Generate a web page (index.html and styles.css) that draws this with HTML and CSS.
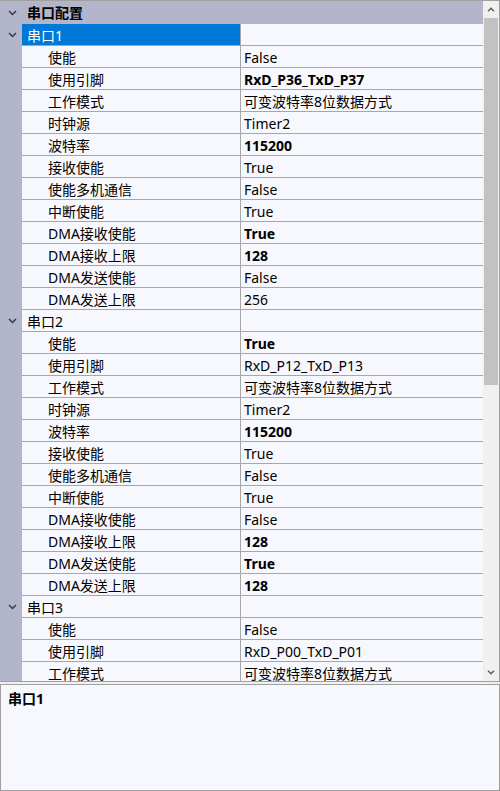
FILE: index.html
```html
<!DOCTYPE html>
<html>
<head>
<meta charset="utf-8">
<link rel="stylesheet" href="styles.css">
</head>
<body>
<div class="grid">
  <div class="rows">
    <div class="head">
      <div class="gut"><svg class="chev" viewBox="0 0 9 6"><polyline points="1,1 4.5,4.5 8,1"/></svg></div>
      <div class="headtxt">串口配置</div>
    </div>

    <div class="row">
      <div class="gut"><svg class="chev" viewBox="0 0 9 6"><polyline points="1,1 4.5,4.5 8,1"/></svg></div>
      <div class="name cat sel">串口1</div><div class="value"></div>
    </div>
    <div class="row"><div class="gut"></div><div class="name">使能</div><div class="value">False</div></div>
    <div class="row"><div class="gut"></div><div class="name">使用引脚</div><div class="value b">RxD_P36_TxD_P37</div></div>
    <div class="row"><div class="gut"></div><div class="name">工作模式</div><div class="value">可变波特率8位数据方式</div></div>
    <div class="row"><div class="gut"></div><div class="name">时钟源</div><div class="value">Timer2</div></div>
    <div class="row"><div class="gut"></div><div class="name">波特率</div><div class="value b">115200</div></div>
    <div class="row"><div class="gut"></div><div class="name">接收使能</div><div class="value">True</div></div>
    <div class="row"><div class="gut"></div><div class="name">使能多机通信</div><div class="value">False</div></div>
    <div class="row"><div class="gut"></div><div class="name">中断使能</div><div class="value">True</div></div>
    <div class="row"><div class="gut"></div><div class="name">DMA接收使能</div><div class="value b">True</div></div>
    <div class="row"><div class="gut"></div><div class="name">DMA接收上限</div><div class="value b">128</div></div>
    <div class="row"><div class="gut"></div><div class="name">DMA发送使能</div><div class="value">False</div></div>
    <div class="row"><div class="gut"></div><div class="name">DMA发送上限</div><div class="value">256</div></div>

    <div class="row">
      <div class="gut"><svg class="chev" viewBox="0 0 9 6"><polyline points="1,1 4.5,4.5 8,1"/></svg></div>
      <div class="name cat">串口2</div><div class="value"></div>
    </div>
    <div class="row"><div class="gut"></div><div class="name">使能</div><div class="value b">True</div></div>
    <div class="row"><div class="gut"></div><div class="name">使用引脚</div><div class="value">RxD_P12_TxD_P13</div></div>
    <div class="row"><div class="gut"></div><div class="name">工作模式</div><div class="value">可变波特率8位数据方式</div></div>
    <div class="row"><div class="gut"></div><div class="name">时钟源</div><div class="value">Timer2</div></div>
    <div class="row"><div class="gut"></div><div class="name">波特率</div><div class="value b">115200</div></div>
    <div class="row"><div class="gut"></div><div class="name">接收使能</div><div class="value">True</div></div>
    <div class="row"><div class="gut"></div><div class="name">使能多机通信</div><div class="value">False</div></div>
    <div class="row"><div class="gut"></div><div class="name">中断使能</div><div class="value">True</div></div>
    <div class="row"><div class="gut"></div><div class="name">DMA接收使能</div><div class="value">False</div></div>
    <div class="row"><div class="gut"></div><div class="name">DMA接收上限</div><div class="value b">128</div></div>
    <div class="row"><div class="gut"></div><div class="name">DMA发送使能</div><div class="value b">True</div></div>
    <div class="row"><div class="gut"></div><div class="name">DMA发送上限</div><div class="value b">128</div></div>

    <div class="row">
      <div class="gut"><svg class="chev" viewBox="0 0 9 6"><polyline points="1,1 4.5,4.5 8,1"/></svg></div>
      <div class="name cat">串口3</div><div class="value"></div>
    </div>
    <div class="row"><div class="gut"></div><div class="name">使能</div><div class="value">False</div></div>
    <div class="row"><div class="gut"></div><div class="name">使用引脚</div><div class="value">RxD_P00_TxD_P01</div></div>
    <div class="row"><div class="gut"></div><div class="name">工作模式</div><div class="value">可变波特率8位数据方式</div></div>
  </div>
  <div class="scroll">
    <div class="arrow"><svg class="sarr" viewBox="0 0 8 5"><polyline points="1,4.2 4,1.2 7,4.2"/></svg></div>
    <div class="thumb"></div>
    <div class="track"></div>
    <div class="arrow"><svg class="sarr" viewBox="0 0 8 5"><polyline points="1,0.8 4,3.8 7,0.8"/></svg></div>
  </div>
</div>
<div class="desc">
  <div class="desctitle">串口1</div>
</div>
</body>
</html>
```

FILE: styles.css
```css
html, body {
  margin: 0;
  padding: 0;
}
body {
  width: 500px;
  height: 791px;
  background: #f0f0f0;
  font-family: "Noto Sans", "Noto Sans CJK SC", sans-serif;
  font-size: 14px;
  color: #000;
  overflow: hidden;
}
.grid {
  box-sizing: border-box;
  width: 500px;
  height: 682px;
  border: 1px solid #a0a0a0;
  border-left-color: #b3b6ca;
  display: flex;
  background: #f7f8fd;
}
.rows {
  width: 482px;
  height: 680px;
  overflow: hidden;
  display: flex;
  flex-direction: column;
}
.head {
  display: flex;
  height: 23px;
  flex: none;
  background: #b3b6ca;
}
.headtxt {
  font-weight: bold;
  line-height: 23px;
  padding-left: 5px;
}
.gut {
  width: 21px;
  flex: none;
  background: #b3b6ca;
  display: flex;
  align-items: center;
  justify-content: center;
}
.chev {
  width: 9px;
  height: 6px;
  fill: none;
  stroke: #3a3a3a;
  stroke-width: 1.5;
  margin-left: 1px;
}
.row {
  display: flex;
  height: 22px;
  flex: none;
}
.name {
  box-sizing: border-box;
  width: 219px;
  flex: none;
  height: 22px;
  line-height: 21px;
  padding-top: 1px;
  padding-left: 26px;
  border-right: 1px solid #a7a7a7;
  border-bottom: 1px solid #a7a7a7;
  white-space: nowrap;
  overflow: hidden;
}
.name.cat {
  padding-left: 5px;
}
.name.sel {
  background: #0078d7;
  color: #fff;
}
.value {
  box-sizing: border-box;
  flex: 1;
  height: 22px;
  line-height: 21px;
  padding-top: 1px;
  padding-left: 3px;
  border-bottom: 1px solid #a7a7a7;
  white-space: nowrap;
  overflow: hidden;
}
.b {
  font-weight: bold;
}
.scroll {
  width: 16px;
  height: 680px;
  background: #f0f0f0;
  display: flex;
  flex-direction: column;
}
.arrow {
  height: 17px;
  flex: none;
  display: flex;
  align-items: center;
  justify-content: center;
}
.sarr {
  width: 8px;
  height: 5px;
  fill: none;
  stroke: #606060;
  stroke-width: 1.5;
}
.thumb {
  height: 367px;
  margin: 0 1px;
  background: #c2c2c2;
  flex: none;
}
.track {
  flex: 1;
}
.desc {
  box-sizing: border-box;
  margin-top: 2px;
  width: 500px;
  height: 107px;
  border: 1px solid #a0a0a0;
  background: #f7f8fd;
  padding: 4px 0 0 7px;
}
.desctitle {
  font-weight: bold;
  line-height: 20px;
}
```
